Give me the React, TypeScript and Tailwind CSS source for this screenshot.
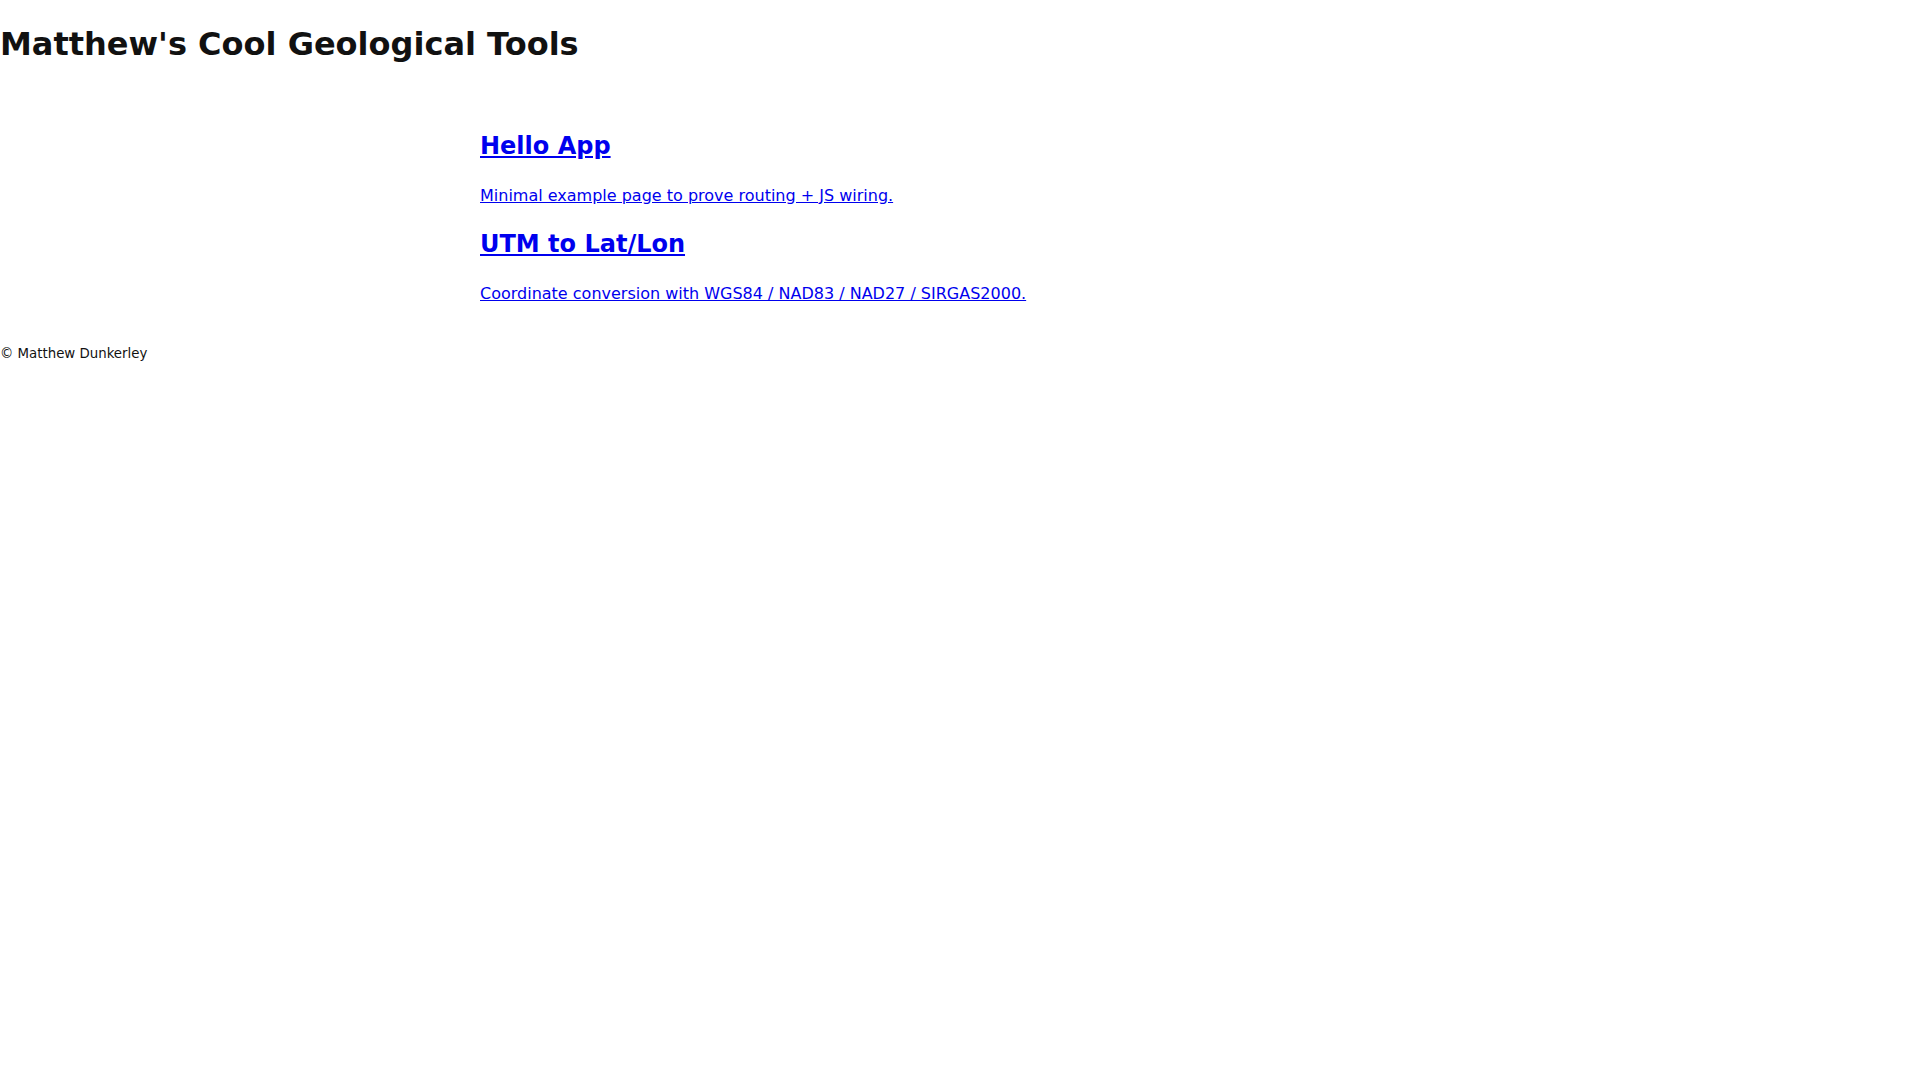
const tools = [
  {
    href: '/hello',
    title: 'Hello App',
    blurb: 'Minimal example page to prove routing + JS wiring.',
  },
  {
    href: '/utm',
    title: 'UTM to Lat/Lon',
    blurb: 'Coordinate conversion with WGS84 / NAD83 / NAD27 / SIRGAS2000.',
  },
];

export default function App() {
  return (
    <div className="min-h-screen bg-white text-[#111] font-['DejaVu_Sans',sans-serif] leading-[1.5]">
      <header>
        <h1 className="pt-[20px] text-[32px] font-bold">Matthew's Cool Geological Tools</h1>
      </header>

      <main className="mx-auto max-w-[960px] pt-[59.5px]">
        <ul>
          {tools.map((tool) => (
            <li key={tool.href} className="mb-[18px]">
              <a href={tool.href} className="block text-[#0000ee] underline">
                <h2 className="text-[24px] font-bold">{tool.title}</h2>
                <p className="mt-[20px] text-[16px]">{tool.blurb}</p>
              </a>
            </li>
          ))}
        </ul>
      </main>

      <footer className="pt-[17px]">
        <small className="text-[13.33px]">© Matthew Dunkerley</small>
      </footer>
    </div>
  );
}
